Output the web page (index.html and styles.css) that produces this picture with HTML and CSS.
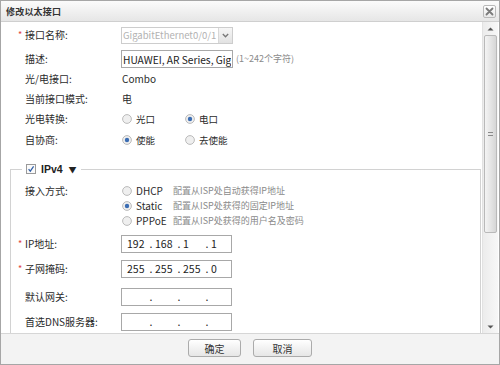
FILE: index.html
```html
<!DOCTYPE html>
<html lang="zh-CN">
<head>
  <meta charset="UTF-8" />
  <title>修改以太接口</title>
  <link rel="stylesheet" href="styles.css">
</head>
<body>
<div class="dialog">

  <!-- Title bar -->
  <div class="title-bar">
    <span class="title">修改以太接口</span>
    <span class="close-btn">
      <svg width="9" height="9" viewBox="0 0 9 9"><path d="M1.5 1.5 L7.5 7.5 M7.5 1.5 L1.5 7.5" stroke="#7a7a7a" stroke-width="1.8" stroke-linecap="round"/></svg>
    </span>
  </div>

  <div class="dialog-body">
    <div class="scroll-area">

      <div class="top-rows">
        <div class="row row-first">
          <span class="star">*</span>
          <span class="label">接口名称:</span>
          <span class="select-box">
            <span class="select-text">GigabitEthernet0/0/1</span>
            <span class="select-arrow">
              <svg width="7" height="5" viewBox="0 0 7 5"><path d="M0.8 1 L3.5 3.8 L6.2 1" fill="none" stroke="#777" stroke-width="1.3"/></svg>
            </span>
          </span>
        </div>

        <div class="row row-desc">
          <span class="star"></span>
          <span class="label">描述:</span>
          <input class="text-box" type="text" readonly value="HUAWEI, AR Series, GigabitEthernet0/0/1 Interface">
          <span class="hint">(1~242个字符)</span>
        </div>

        <div class="row">
          <span class="star"></span>
          <span class="label">光/电接口:</span>
          <span class="value">Combo</span>
        </div>

        <div class="row">
          <span class="star"></span>
          <span class="label">当前接口模式:</span>
          <span class="value">电</span>
        </div>

        <div class="row">
          <span class="star"></span>
          <span class="label">光电转换:</span>
          <span class="radio-opt">
            <svg class="radio" width="10" height="10" viewBox="0 0 10 10"><circle cx="5" cy="5" r="4.4" fill="#efefef" stroke="#b4b4b4" stroke-width="0.9"/></svg>
            光口
          </span>
          <span class="radio-opt">
            <svg class="radio" width="10" height="10" viewBox="0 0 10 10"><circle cx="5" cy="5" r="4.4" fill="#efefef" stroke="#b4b4b4" stroke-width="0.9"/><circle cx="5" cy="5" r="2.2" fill="#3b6db3"/></svg>
            电口
          </span>
        </div>

        <div class="row row-auto">
          <span class="star"></span>
          <span class="label">自协商:</span>
          <span class="radio-opt">
            <svg class="radio" width="10" height="10" viewBox="0 0 10 10"><circle cx="5" cy="5" r="4.4" fill="#efefef" stroke="#b4b4b4" stroke-width="0.9"/><circle cx="5" cy="5" r="2.2" fill="#3b6db3"/></svg>
            使能
          </span>
          <span class="radio-opt">
            <svg class="radio" width="10" height="10" viewBox="0 0 10 10"><circle cx="5" cy="5" r="4.4" fill="#efefef" stroke="#b4b4b4" stroke-width="0.9"/></svg>
            去使能
          </span>
        </div>
      </div>

      <!-- IPv4 group -->
      <fieldset class="ipv4">
        <legend>
          <svg class="check" width="10" height="10" viewBox="0 0 10 10"><rect x="0.5" y="0.5" width="9" height="9" fill="#fafafa" stroke="#9a9a9a"/><path d="M2.6 5.2 L4.3 7.2 L7.6 2.4" fill="none" stroke="#2f5fa8" stroke-width="1.2"/></svg>
          <span class="legend-text">IPv4</span>
          <span class="legend-arrow">▼</span>
        </legend>

        <div class="row row-access">
          <span class="star"></span>
          <span class="label">接入方式:</span>
          <div class="access-list">
            <div class="access-opt">
              <svg class="radio" width="10" height="10" viewBox="0 0 10 10"><circle cx="5" cy="5" r="4.4" fill="#efefef" stroke="#b4b4b4" stroke-width="0.9"/></svg>
              <span class="access-name">DHCP</span>
              <span class="access-desc">配置从ISP处自动获得IP地址</span>
            </div>
            <div class="access-opt">
              <svg class="radio" width="10" height="10" viewBox="0 0 10 10"><circle cx="5" cy="5" r="4.4" fill="#efefef" stroke="#b4b4b4" stroke-width="0.9"/><circle cx="5" cy="5" r="2.2" fill="#3b6db3"/></svg>
              <span class="access-name">Static</span>
              <span class="access-desc">配置从ISP处获得的固定IP地址</span>
            </div>
            <div class="access-opt">
              <svg class="radio" width="10" height="10" viewBox="0 0 10 10"><circle cx="5" cy="5" r="4.4" fill="#efefef" stroke="#b4b4b4" stroke-width="0.9"/></svg>
              <span class="access-name">PPPoE</span>
              <span class="access-desc">配置从ISP处获得的用户名及密码</span>
            </div>
          </div>
        </div>

        <div class="row row-ip">
          <span class="star">*</span>
          <span class="label">IP地址:</span>
          <span class="ip-box">
            <span class="seg">192</span><span class="dot">.</span><span class="seg">168</span><span class="dot">.</span><span class="seg">1</span><span class="dot">.</span><span class="seg">1</span>
          </span>
        </div>

        <div class="row row-mask">
          <span class="star">*</span>
          <span class="label">子网掩码:</span>
          <span class="ip-box">
            <span class="seg">255</span><span class="dot">.</span><span class="seg">255</span><span class="dot">.</span><span class="seg">255</span><span class="dot">.</span><span class="seg">0</span>
          </span>
        </div>

        <div class="row row-gw">
          <span class="star"></span>
          <span class="label">默认网关:</span>
          <span class="ip-box">
            <span class="seg"></span><span class="dot">.</span><span class="seg"></span><span class="dot">.</span><span class="seg"></span><span class="dot">.</span><span class="seg"></span>
          </span>
        </div>

        <div class="row row-dns">
          <span class="star"></span>
          <span class="label">首选DNS服务器:</span>
          <span class="ip-box">
            <span class="seg"></span><span class="dot">.</span><span class="seg"></span><span class="dot">.</span><span class="seg"></span><span class="dot">.</span><span class="seg"></span>
          </span>
        </div>
      </fieldset>

    </div>

    <!-- Scrollbar -->
    <div class="scrollbar">
      <div class="sb-arrow">
        <svg width="7" height="4" viewBox="0 0 7 4"><path d="M0.5 3.5 L3.5 0.5 L6.5 3.5 Z" fill="#555"/></svg>
      </div>
      <div class="sb-thumb">
        <span class="grip"></span>
      </div>
      <div class="sb-track"></div>
      <div class="sb-arrow">
        <svg width="7" height="4" viewBox="0 0 7 4"><path d="M0.5 0.5 L6.5 0.5 L3.5 3.5 Z" fill="#555"/></svg>
      </div>
    </div>
  </div>

  <!-- Footer -->
  <div class="footer">
    <button class="btn btn-ok">确定</button>
    <button class="btn btn-cancel">取消</button>
  </div>

</div>
</body>
</html>
```

FILE: styles.css
```css
body {
  margin: 0;
  padding: 0;
  background-color: #ffffff;
  font-family: "Noto Sans CJK SC", "Liberation Sans", sans-serif;
  font-size: 10px;
  color: #2b2b2b;
}

.dialog {
  width: 500px;
  height: 365px;
  box-sizing: border-box;
  border: 1px solid #a6a6a6;
  display: flex;
  flex-direction: column;
  background-color: #fff;
  overflow: hidden;
}

/* Title bar */
.title-bar {
  height: 21px;
  box-sizing: border-box;
  flex-shrink: 0;
  display: flex;
  justify-content: space-between;
  align-items: center;
  padding: 0 3px 0 5px;
  background: linear-gradient(to bottom, #fbfbfb, #e6e6e6);
  border-bottom: 1px solid #cfcfcf;
}

.title-bar .title {
  font-size: 9px;
  font-weight: bold;
  color: #333;
  letter-spacing: 0.2px;
}

.close-btn {
  width: 11px;
  height: 11px;
  border: 1px solid #b9b9b9;
  border-radius: 2px;
  background: linear-gradient(to bottom, #ffffff, #e8e8e8);
  display: flex;
  align-items: center;
  justify-content: center;
}

/* Body */
.dialog-body {
  height: 311px;
  flex-shrink: 0;
  display: flex;
  padding-right: 1px;
  border-bottom: 1px solid #d6d6d6;
}

.scroll-area {
  flex: 1;
  overflow: hidden;
  padding-top: 3px;
}

.top-rows {
  padding-left: 17px;
}

.row {
  display: flex;
  align-items: center;
  height: 20px;
  line-height: 14px;
}

.row-desc {
  margin-top: 4px;
}

.row-auto {
  margin-top: 1px;
}

.star {
  width: 7px;
  color: #e0443c;
  font-size: 9px;
}

.label {
  width: 96px;
  flex-shrink: 0;
  white-space: nowrap;
}

.value {
  padding-left: 1px;
}

.select-box {
  width: 112px;
  height: 17px;
  box-sizing: border-box;
  border: 1px solid #cdcdcd;
  background-color: #fff;
  display: flex;
  align-items: center;
}

.select-text {
  flex: 1;
  padding-left: 1px;
  color: #b2b2b2;
  font-size: 9.5px;
  white-space: nowrap;
  overflow: hidden;
}

.select-arrow {
  width: 13px;
  height: 15px;
  border-left: 1px solid #d8d8d8;
  background: linear-gradient(to bottom, #f6f6f6, #e2e2e2);
  display: flex;
  align-items: center;
  justify-content: center;
}

.text-box {
  width: 112px;
  height: 18px;
  box-sizing: border-box;
  margin: 0;
  border: 1px solid #a8a8a8;
  padding: 0 1px;
  font-family: "Noto Sans CJK SC", "Liberation Sans", sans-serif;
  font-size: 10.2px;
  color: #222;
  background-color: #fff;
  outline: none;
}

.hint {
  padding-left: 3px;
  color: #8a8a8a;
  font-size: 9px;
}

.radio-opt {
  width: 62px;
  display: flex;
  align-items: center;
  gap: 4px;
  padding-left: 1px;
  font-size: 9.5px;
}

.radio {
  flex-shrink: 0;
}

/* IPv4 fieldset */
.ipv4 {
  margin: 12px 1px 0 9px;
  padding: 7px 0 40px 7px;
  border: 1px solid #d2d2d2;
  min-width: 0;
}

.ipv4 legend {
  margin-left: 4px;
  padding: 0 4px;
  height: 14px;
  display: flex;
  align-items: center;
  gap: 5px;
}

.legend-text {
  font-family: "Liberation Sans", sans-serif;
  font-weight: bold;
  font-size: 10.5px;
  color: #222;
}

.legend-arrow {
  font-size: 8px;
  color: #222;
  padding-left: 1px;
}

.row-access {
  height: auto;
  align-items: flex-start;
}

.row-access .label {
  line-height: 15px;
}

.access-list {
  display: flex;
  flex-direction: column;
}

.access-opt {
  height: 15px;
  display: flex;
  align-items: center;
  padding-left: 1px;
}

.access-name {
  width: 37px;
  padding-left: 4px;
  color: #2b2b2b;
}

.access-desc {
  color: #8a8a8a;
  font-size: 9px;
  white-space: nowrap;
}

.row-ip {
  margin-top: 6px;
}

.row-mask {
  margin-top: 5px;
}

.row-gw {
  margin-top: 8px;
}

.row-dns {
  margin-top: 5px;
}

.ip-box {
  width: 111px;
  height: 18px;
  box-sizing: border-box;
  border: 1px solid #a8a8a8;
  padding-left: 5px;
  display: flex;
  align-items: center;
  font-size: 10.5px;
  color: #222;
}

.seg {
  width: 20px;
}

.dot {
  width: 8px;
  text-align: center;
}

/* Scrollbar */
.scrollbar {
  width: 15px;
  flex-shrink: 0;
  display: flex;
  flex-direction: column;
  background: linear-gradient(to right, #ececec, #f7f7f7);
  border-left: 1px solid #e2e2e2;
}

.sb-arrow {
  height: 13px;
  display: flex;
  align-items: center;
  justify-content: center;
}

.sb-thumb {
  height: 196px;
  margin: 0 1px;
  border: 1px solid #b9b9b9;
  border-radius: 2px;
  background: linear-gradient(to right, #f4f4f4, #d6d6d6);
  display: flex;
  align-items: center;
  justify-content: center;
}

.grip {
  width: 5px;
  height: 4px;
  border-top: 1px solid #8a8a8a;
  border-bottom: 1px solid #8a8a8a;
  box-sizing: border-box;
}

.sb-track {
  flex: 1;
}

/* Footer */
.footer {
  flex: 1;
  background-color: #f3f3f3;
  display: flex;
  justify-content: center;
  align-items: center;
  gap: 12px;
  padding-bottom: 2px;
}

.btn {
  height: 18px;
  padding: 0;
  font-family: "Noto Sans CJK SC", sans-serif;
  font-size: 10px;
  color: #333;
  border: 1px solid #ababab;
  border-radius: 3px;
  background: linear-gradient(to bottom, #ffffff, #e6e6e6);
}

.btn-ok {
  width: 53px;
}

.btn-cancel {
  width: 59px;
}
```
